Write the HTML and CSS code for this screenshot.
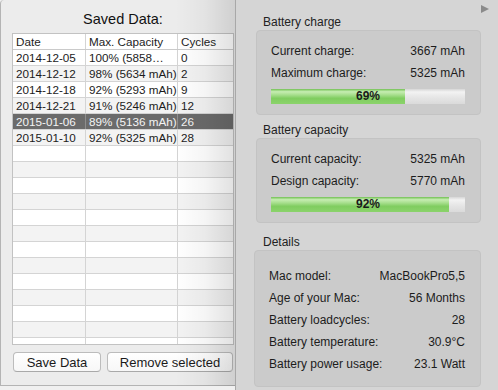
FILE: index.html
```html
<!DOCTYPE html>
<html lang="en">
<head>
  <meta charset="UTF-8" />
  <title>Battery Health</title>
  <link rel="stylesheet" href="styles.css">
</head>
<body>
  <div class="window">
    <h1 class="title">Saved Data:</h1>
    <div class="grid">
      <div class="row head"><span>Date</span><span>Max. Capacity</span><span>Cycles</span></div>
      <div class="row"><span>2014-12-05</span><span>100% (5858…</span><span>0</span></div>
      <div class="row"><span>2014-12-12</span><span>98% (5634 mAh)</span><span>2</span></div>
      <div class="row"><span>2014-12-18</span><span>92% (5293 mAh)</span><span>9</span></div>
      <div class="row"><span>2014-12-21</span><span>91% (5246 mAh)</span><span>12</span></div>
      <div class="row selected"><span>2015-01-06</span><span>89% (5136 mAh)</span><span>26</span></div>
      <div class="row"><span>2015-01-10</span><span>92% (5325 mAh)</span><span>28</span></div>
      <div class="row"><span></span><span></span><span></span></div>
      <div class="row"><span></span><span></span><span></span></div>
      <div class="row"><span></span><span></span><span></span></div>
      <div class="row"><span></span><span></span><span></span></div>
      <div class="row"><span></span><span></span><span></span></div>
      <div class="row"><span></span><span></span><span></span></div>
      <div class="row"><span></span><span></span><span></span></div>
      <div class="row"><span></span><span></span><span></span></div>
      <div class="row"><span></span><span></span><span></span></div>
      <div class="row"><span></span><span></span><span></span></div>
      <div class="row"><span></span><span></span><span></span></div>
      <div class="row"><span></span><span></span><span></span></div>
      <div class="row"><span></span><span></span><span></span></div>
    </div>
    <div class="buttons">
      <button class="btn save">Save Data</button>
      <button class="btn remove">Remove selected</button>
    </div>
  </div>

  <div class="drawer">
    <span class="toggle"></span>

    <div class="section">
      <div class="section-title">Battery charge</div>
      <div class="box">
        <div class="line"><span>Current charge:</span><span>3667 mAh</span></div>
        <div class="line"><span>Maximum charge:</span><span>5325 mAh</span></div>
        <div class="bar">
          <div class="fill" style="width: 69%"></div>
          <span class="bar-text">69%</span>
        </div>
      </div>
    </div>

    <div class="section">
      <div class="section-title">Battery capacity</div>
      <div class="box">
        <div class="line"><span>Current capacity:</span><span>5325 mAh</span></div>
        <div class="line"><span>Design capacity:</span><span>5770 mAh</span></div>
        <div class="bar">
          <div class="fill" style="width: 92%"></div>
          <span class="bar-text">92%</span>
        </div>
      </div>
    </div>

    <div class="section details">
      <div class="section-title">Details</div>
      <div class="box">
        <div class="line"><span>Mac model:</span><span>MacBookPro5,5</span></div>
        <div class="line"><span>Age of your Mac:</span><span>56 Months</span></div>
        <div class="line"><span>Battery loadcycles:</span><span>28</span></div>
        <div class="line"><span>Battery temperature:</span><span>30.9°C</span></div>
        <div class="line"><span>Battery power usage:</span><span>23.1 Watt</span></div>
      </div>
    </div>
  </div>
</body>
</html>
```

FILE: styles.css
```css
body {
  margin: 0;
  width: 498px;
  height: 390px;
  overflow: hidden;
  display: flex;
  align-items: flex-start;
  background: #f0f0f0;
  font-family: "Liberation Sans", Arial, sans-serif;
  font-size: 12px;
  color: #1c1c1c;
}
.window {
  position: relative;
  width: 235px;
  height: 386px;
  box-sizing: border-box;
  background: #ececec;
  border-left: 1px solid #b4b4b4;
  border-bottom: 1px solid #b4b4b4;
  border-top-left-radius: 4px;
  padding: 10px 1px 0 11px;
}
.window::after {
  content: "";
  position: absolute;
  top: 0;
  right: 0;
  bottom: -1px;
  width: 60px;
  background: linear-gradient(to right, rgba(0,0,0,0), rgba(0,0,0,0.04) 50%, rgba(0,0,0,0.12));
  pointer-events: none;
}
.title {
  margin: 0 0 5px;
  font-size: 14.5px;
  font-weight: normal;
  line-height: 18px;
  text-align: center;
  color: #111;
}
.grid {
  height: 312px;
  box-sizing: border-box;
  border: 1px solid #c2c2c2;
  background: #fff;
  overflow: hidden;
  font-size: 11.7px;
}
.row {
  display: grid;
  grid-template-columns: 73px 92px 1fr;
  height: 16px;
  box-sizing: border-box;
  border-bottom: 1px solid #d4d4d4;
  background: #fff;
}
.row:nth-child(odd) {
  background: #f3f3f3;
}
.row.head {
  background: #fff;
  border-bottom-color: #cacaca;
}
.row span {
  display: block;
  padding-left: 3px;
  line-height: 15px;
  border-right: 1px solid #d4d4d4;
  white-space: nowrap;
  overflow: hidden;
}
.row span:last-child {
  border-right: none;
}
.row.selected {
  background: #6b6b6b;
  color: #f4f4f4;
}
.row.selected span {
  border-right-color: #8e8e8e;
}
.buttons {
  display: flex;
  gap: 6px;
  margin: 7px 0 0 1px;
}
.btn {
  height: 20px;
  padding: 0;
  font-family: "Liberation Sans", Arial, sans-serif;
  font-size: 13px;
  color: #1a1a1a;
  background: linear-gradient(#ffffff, #f7f7f7);
  border: 1px solid #bcbcbc;
  border-bottom-color: #a9a9a9;
  border-radius: 4px;
}
.save {
  width: 88px;
}
.remove {
  width: 126px;
}
.drawer {
  position: relative;
  width: 263px;
  height: 390px;
  box-sizing: border-box;
  background: #d5d5d5;
  border-left: 1px solid #a8a8a8;
  padding: 15px 17px 0 20px;
}
.toggle {
  position: absolute;
  top: 5px;
  right: 9px;
  width: 0;
  height: 0;
  border-left: 8px solid #8a8a8a;
  border-top: 4px solid transparent;
  border-bottom: 4px solid transparent;
}
.section + .section {
  margin-top: 8px;
}
.section.details {
  margin-top: 12px;
}
.section-title {
  margin-left: 7px;
  line-height: 15px;
  color: #222;
}
.box {
  background: #cbcbcb;
  border: 1px solid #c3c3c3;
  border-radius: 4px;
  padding: 9px 15px 10px 14px;
}
.details .box {
  margin-left: -2px;
  padding-top: 14px;
  padding-bottom: 11px;
}
.line {
  display: flex;
  justify-content: space-between;
  line-height: 22px;
}
.bar {
  position: relative;
  height: 15px;
  margin-top: 5px;
  background: linear-gradient(#d6d6d6, #f3f3f3 20%, #e6e6e6 55%, #dadada);
}
.fill {
  height: 100%;
  background: linear-gradient(#72c053, #c6edb2 18%, #a6de8c 40%, #80cd60 62%, #8bd36b);
}
.bar-text {
  position: absolute;
  top: 0;
  left: 0;
  right: 0;
  text-align: center;
  line-height: 15px;
  font-weight: bold;
  color: #1a1a1a;
}
```
